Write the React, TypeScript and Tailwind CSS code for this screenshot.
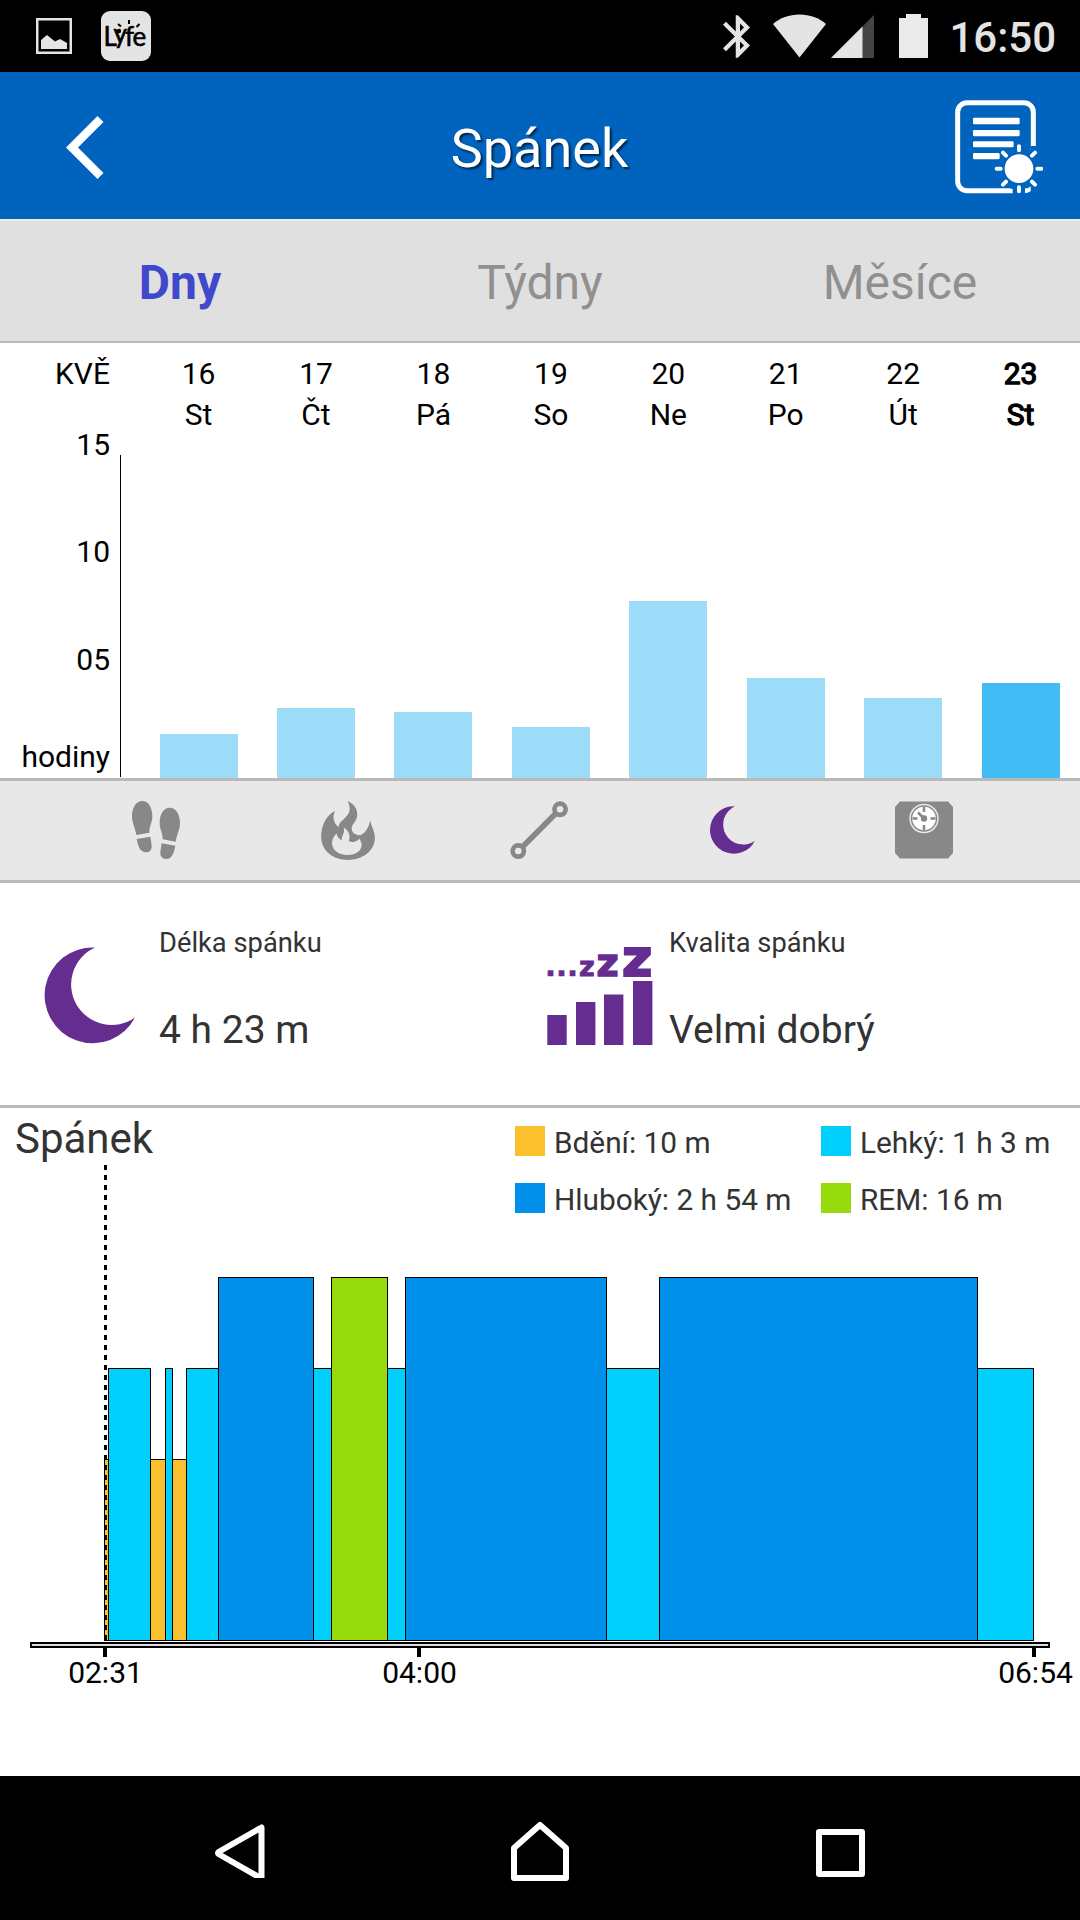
import { clsx } from "clsx";

interface DayEntry {
  date: string;
  weekday: string;
  barHeight: number;
  active?: boolean;
}

const DAYS: DayEntry[] = [
  { date: "16", weekday: "St", barHeight: 44 },
  { date: "17", weekday: "Čt", barHeight: 70 },
  { date: "18", weekday: "Pá", barHeight: 66 },
  { date: "19", weekday: "So", barHeight: 51 },
  { date: "20", weekday: "Ne", barHeight: 177 },
  { date: "21", weekday: "Po", barHeight: 100 },
  { date: "22", weekday: "Út", barHeight: 80 },
  { date: "23", weekday: "St", barHeight: 95, active: true },
];

type Phase = "awake" | "light" | "deep" | "rem";

const PHASE_COLORS: Record<Phase, string> = {
  awake: "#fbc12d",
  light: "#00cffb",
  deep: "#0090e9",
  rem: "#97da0c",
};

const PHASE_TOPS: Record<Phase, number> = {
  awake: 294.5,
  light: 203.5,
  deep: 112.5,
  rem: 112.5,
};

const CHART_BASE = 475.5;

const SEGMENTS: { phase: Phase; from: number; to: number }[] = [
  { phase: "awake", from: 104.5, to: 108.5 },
  { phase: "light", from: 108.5, to: 150.5 },
  { phase: "awake", from: 150.5, to: 165.5 },
  { phase: "light", from: 165.5, to: 172.5 },
  { phase: "awake", from: 172.5, to: 186.5 },
  { phase: "light", from: 186.5, to: 218.5 },
  { phase: "deep", from: 218.5, to: 313.5 },
  { phase: "light", from: 313.5, to: 331.5 },
  { phase: "rem", from: 331.5, to: 387.5 },
  { phase: "light", from: 387.5, to: 405.5 },
  { phase: "deep", from: 405.5, to: 606.5 },
  { phase: "light", from: 606.5, to: 659.5 },
  { phase: "deep", from: 659.5, to: 977.5 },
  { phase: "light", from: 977.5, to: 1033.5 },
];

const TICKS = [
  { x: 105, label: "02:31" },
  { x: 419, label: "04:00" },
  { x: 1034, label: "06:54" },
];

const LEGEND: { phase: Phase; label: string }[] = [
  { phase: "awake", label: "Bdění: 10 m" },
  { phase: "light", label: "Lehký: 1 h 3 m" },
  { phase: "deep", label: "Hluboký: 2 h 54 m" },
  { phase: "rem", label: "REM: 16 m" },
];

const LyfeBadge = () => (
  <svg className="ml-[29px] h-[50px] w-[50px]" viewBox="0 0 50 50">
    <rect width="50" height="50" rx="9" fill="#e4e4e4" />
    <text
      x="2.5 12.5 24 31.5"
      y="35"
      dy="0 -3 3 0"
      fontFamily="Lato, sans-serif"
      fontSize="26"
      stroke="#000"
      strokeWidth="0.6"
    >
      Lyfe
    </text>
    <circle cx="18" cy="20" r="2.2" />
    <path
      d="M17 13l3 2.5M28 9v4M38.5 13l-3 3"
      stroke="#000"
      strokeWidth="2"
      fill="none"
    />
  </svg>
);

const StatusBar = () => (
  <div className="flex h-[72px] items-center bg-black pr-[24px] pl-[36px]">
    <svg className="h-[36px] w-[36px]" viewBox="0 0 36 36" fill="#e4e4e4">
      <rect x="1.25" y="1.25" width="33.5" height="33.5" fill="none" stroke="#e4e4e4" strokeWidth="2.5" />
      <path d="M5 31V22l6-5 8 6.500 5-2.500 7 4v6z" />
    </svg>
    <LyfeBadge />
    <svg className="ml-auto h-[43px] w-[27px]" viewBox="5 2 12.710 20" fill="#e4e4e4">
      <path d="M17.710 7.710L12 2h-1v7.590L6.410 5 5 6.410 10.590 12 5 17.590 6.410 19 11 14.410V22h1l5.710-5.710-4.300-4.290 4.300-4.290zM13 5.830l1.880 1.880L13 9.590V5.830zm1.880 10.460L13 18.170v-3.760l1.880 1.880z" />
    </svg>
    <svg className="ml-[23px] h-[44px] w-[53px]" viewBox="0 0 53 44" fill="#e4e4e4">
      <path d="M26.500 43.500L0 10C7 4 16 0.500 26.500 0.500S46 4 53 10z" />
    </svg>
    <svg className="ml-[5px] h-[43px] w-[43px]" viewBox="0 0 43 43">
      <path d="M0 43L43 0v43z" fill="#444" />
      <path d="M0 43L31.500 11.500V43z" fill="#e4e4e4" />
    </svg>
    <svg className="ml-[25px] h-[44px] w-[29px]" viewBox="0 0 29 44" fill="#eaeaea">
      <path d="M7 0h15v4h7v40H0V4h7z" />
    </svg>
    <span className="ml-[21px] pt-[3px] text-[42px] leading-none font-medium text-[#e4e4e4]">
      16:50
    </span>
  </div>
);

const ReportIcon = () => (
  <svg className="mt-[2px] h-[94px] w-[88px]" viewBox="765 300 264 282" fill="none">
    <rect x="773" y="308" width="227" height="264" rx="28" stroke="#fff" strokeWidth="15" />
    <g fill="#fff">
      <rect x="819" y="353" width="140" height="20" rx="4" />
      <rect x="819" y="390" width="140" height="19" rx="4" />
      <rect x="819" y="424" width="122" height="18" rx="4" />
      <rect x="819" y="459" width="80" height="19" rx="4" />
    </g>
    <path d="M992 438h20v140h-20zM938 560h37v22h-37z" fill="#0063bd" />
    <circle cx="957" cy="506" r="64" fill="#0063bd" />
    <circle cx="957" cy="506" r="43" fill="#fff" />
    <path
      d="M957 439v12M957 562v12M890 506h12M1012 506h12M909 458l9 9M996 545l9 9M1005 458l-9 9M918 545l-9 9"
      stroke="#fff"
      strokeWidth="12"
      strokeLinecap="round"
    />
    <path d="M976 563l17 8q-7 6-17 8z" fill="#fff" />
  </svg>
);

const Header = () => (
  <header className="flex h-[149px] items-center justify-between border-b-2 border-[#eee] bg-[#0063bd] pr-[37px] pl-[66px]">
    <svg className="mt-[2px] h-[64px] w-[88px]" viewBox="0 0 88 64">
      <path d="M34.500 4L6 32.500 34.500 61" fill="none" stroke="#fff" strokeWidth="8.500" />
    </svg>
    <h1 className="pt-[7px] pr-[30px] text-[54px] leading-none text-white [text-shadow:2px_2px_2px_rgba(0,0,0,0.6)]">
      Spánek
    </h1>
    <ReportIcon />
  </header>
);

const Tabs = () => (
  <nav className="grid h-[122px] grid-cols-3 items-center border-b-2 border-[#bbb] bg-[#e0e0e0] pt-[3px] text-center text-[48px] leading-none text-[#909090]">
    <span className="font-bold text-[#4048cc]">Dny</span>
    <span>Týdny</span>
    <span>Měsíce</span>
  </nav>
);

const DailyChart = () => (
  <section className="flex h-[438px] border-b-3 border-[#b9b9b9] text-[30px] text-black">
    <div className="flex w-[110px] flex-col pt-[10px] text-right leading-[40px]">
      <span className="leading-[41px]">KVĚ</span>
      <span className="mt-[31px]">15</span>
      <span className="mt-[67px]">10</span>
      <span className="mt-[68px]">05</span>
      <span className="mt-[57px]">hodiny</span>
    </div>
    <div className="mt-[112px] mr-[18.9px] mb-px ml-[10px] w-px bg-black" />
    <div className="grid flex-1 grid-cols-8 pr-[0.7px]">
      {DAYS.map((day) => (
        <div
          key={day.date}
          className={clsx(
            "flex flex-col items-center pt-[10px] leading-[41px]",
            day.active && "[-webkit-text-stroke:1.3px_black]",
          )}
        >
          <span>{day.date}</span>
          <span>{day.weekday}</span>
          <div
            className={clsx("mt-auto w-[78px]", day.active ? "bg-[#41bcf4]" : "bg-[#9cdcf9]")}
            style={{ height: day.barHeight }}
          />
        </div>
      ))}
    </div>
  </section>
);

const MoonIcon = ({ className }: { className: string }) => (
  <svg className={clsx("overflow-visible", className)} viewBox="0 0 90 97" fill="#662d91">
    <path d="M50 0.500A47.900 47.900 0 1 0 90 70.500A40.500 40.500 0 1 1 50 0.500z" />
  </svg>
);

const FOOT_PATH =
  "M31 0C50 0 61 20 61 46C61 68 52 72 52 95L13 102C10 82 0 66 0 46C0 20 12 0 31 0zM14 114L55 107C57 120 59 130 59 137C59 147 52 154 42 154C26 154 18 138 14 114z";

const MetricStrip = () => (
  <div className="grid h-[102px] grid-cols-5 items-center justify-items-center border-b-3 border-[#b9b9b9] bg-[#e8e8e8] px-[60px] pb-px">
    <svg className="h-[58px] w-[48px]" viewBox="0 0 144 174" fill="#888">
      <path d={FOOT_PATH} />
      <path d={FOOT_PATH} transform="translate(144 20) scale(-1 1)" />
    </svg>
    <svg className="mr-px h-[59px] w-[54px]" viewBox="663 92 162 178" fill="#888">
      <path
        fillRule="evenodd"
        d="M742 92C764 101 776 120 771 141C767 156 755 162 755 176C756 188 766 195 777 195C792 195 806 176 811 150C814 170 825 180 825 204C825 243 788 270 744 270C699 270 663 242 663 200C663 162 682 132 705 122C697 138 699 156 715 171C718 156 728 150 736 142C750 128 754 114 742 92zM709 190C700 200 695 210 696 222C697 241 716 255 742 255C764 255 782 246 785 228C786 222 784 214 778 206C768 216 758 219 746 213C752 202 749 182 731 172C736 190 724 196 725 211C717 207 712 200 709 190z"
      />
    </svg>
    <svg className="mr-[2px] h-[58px] w-[58px]" viewBox="0 0 175 175" fill="none" stroke="#888">
      <circle cx="151" cy="25" r="17" strokeWidth="14" />
      <circle cx="25" cy="151" r="17" strokeWidth="14" />
      <path d="M38 138L138 38" strokeWidth="17" />
    </svg>
    <MoonIcon className="h-[48px] w-[45px]" />
    <svg className="h-[58px] w-[58px]" viewBox="0 0 58 58" fill="none">
      <path d="M5 0.500h48l5 5.500v46l-5 5.500H5L0 52V6z" fill="#888" />
      <circle cx="29" cy="17.500" r="14" stroke="#e8e8e8" strokeWidth="1.500" />
      <circle cx="29" cy="17.500" r="11.800" fill="#fff" />
      <path
        d="M29 6v5M29 24v5M17.500 17.500h5M35.500 17.500h5M29 17.500l-6-6"
        stroke="#888"
        strokeWidth="2.500"
      />
      <circle cx="29" cy="17.500" r="3.200" fill="#888" />
    </svg>
  </div>
);

const QualityIcon = () => (
  <svg className="mt-[62px] h-[101px] w-[106px] shrink-0 overflow-visible" viewBox="0 0 106 101" fill="#662d91">
    <g fontFamily="'DejaVu Sans', sans-serif" fontWeight="bold" stroke="#662d91">
      <text x="-2" y="31" fontSize="29" strokeWidth="0.5">...</text>
      <text x="32" y="30.500" fontSize="27" strokeWidth="0.800">z</text>
      <text x="49.500" y="30.500" fontSize="38" strokeWidth="1.500">z</text>
      <text x="75" y="30.500" fontSize="52" strokeWidth="2.200">z</text>
    </g>
    <rect x="0.300" y="70" width="19.400" height="30" />
    <rect x="29" y="57" width="19.400" height="43" />
    <rect x="57" y="49.500" width="19.400" height="50.500" />
    <rect x="86" y="36" width="19.400" height="64" />
  </svg>
);

const SummaryText = ({ label, value }: { label: string; value: string }) => (
  <div className="flex flex-col pt-[42px]">
    <span className="text-[27.3px] leading-[36px]">{label}</span>
    <span className="mt-[45px] text-[39px] leading-[48px]">{value}</span>
  </div>
);

const Summary = () => (
  <section className="flex h-[225px] border-b-3 border-[#b9b9b9] pl-[45px] text-[#333]">
    <div className="flex w-[502px] gap-[24px]">
      <MoonIcon className="mt-[64px] h-[97px] w-[90px]" />
      <SummaryText label="Délka spánku" value="4 h 23 m" />
    </div>
    <div className="flex gap-[16px]">
      <QualityIcon />
      <SummaryText label="Kvalita spánku" value="Velmi dobrý" />
    </div>
  </section>
);

const Hypnogram = () => (
  <svg className="h-[611px] w-full" viewBox="0 0 1080 611">
    {SEGMENTS.map(({ phase, from, to }) => (
      <rect
        key={from}
        x={from}
        y={PHASE_TOPS[phase]}
        width={to - from}
        height={CHART_BASE - PHASE_TOPS[phase]}
        fill={PHASE_COLORS[phase]}
        stroke="#000"
      />
    ))}
    <path d="M105.500 0V475" stroke="#000" strokeWidth="3" strokeDasharray="5 5" />
    <rect x="31" y="478" width="1018" height="4" fill="#ddd" stroke="#000" strokeWidth="2" />
    {TICKS.map(({ x, label }) => (
      <g key={label}>
        <rect x={x - 2} y="483" width="4" height="9" />
        <text x={label === "06:54" ? x + 1.5 : x + 0.5} y="518" fontSize="30" textAnchor="middle">
          {label}
        </text>
      </g>
    ))}
  </svg>
);

const SleepDetail = () => (
  <section className="flex h-[668px] flex-col">
    <div className="flex h-[57px] shrink-0 justify-between pl-[15px] text-[#333]">
      <h2 className="pt-[6px] text-[42px] leading-[50px]">Spánek</h2>
      <ul className="grid w-[565px] auto-rows-[30px] grid-cols-[306px_1fr] gap-y-[27px] pt-[18px]">
        {LEGEND.map(({ phase, label }) => (
          <li key={phase} className="flex items-center gap-[9px]">
            <span className="size-[30px]" style={{ backgroundColor: PHASE_COLORS[phase] }} />
            <span className="pt-[3px] text-[29.8px] leading-none whitespace-nowrap">{label}</span>
          </li>
        ))}
      </ul>
    </div>
    <Hypnogram />
  </section>
);

const NavigationBar = () => (
  <footer className="grid h-[144px] grid-cols-3 items-center justify-items-center bg-black px-[90px]">
    <svg className="h-[60px] w-[60px]" viewBox="0 0 60 60">
      <path d="M51.500 9.500v51L8.500 36q-1-1 0-2z" fill="none" stroke="#fff" strokeWidth="6" strokeLinejoin="round" />
    </svg>
    <svg className="h-[60px] w-[60px] overflow-visible" viewBox="0 0 60 60">
      <path d="M30 7L56 30v30H4V30z" fill="none" stroke="#fff" strokeWidth="6" strokeLinejoin="round" />
    </svg>
    <svg className="h-[60px] w-[60px]" viewBox="0 0 60 60">
      <rect x="9" y="14" width="43" height="42" fill="none" stroke="#fff" strokeWidth="6" strokeLinejoin="round" />
    </svg>
  </footer>
);

export default function App() {
  return (
    <main className="flex h-[1920px] w-[1080px] flex-col overflow-hidden bg-white font-[Roboto,sans-serif]">
      <StatusBar />
      <Header />
      <Tabs />
      <DailyChart />
      <MetricStrip />
      <Summary />
      <SleepDetail />
      <NavigationBar />
    </main>
  );
}
